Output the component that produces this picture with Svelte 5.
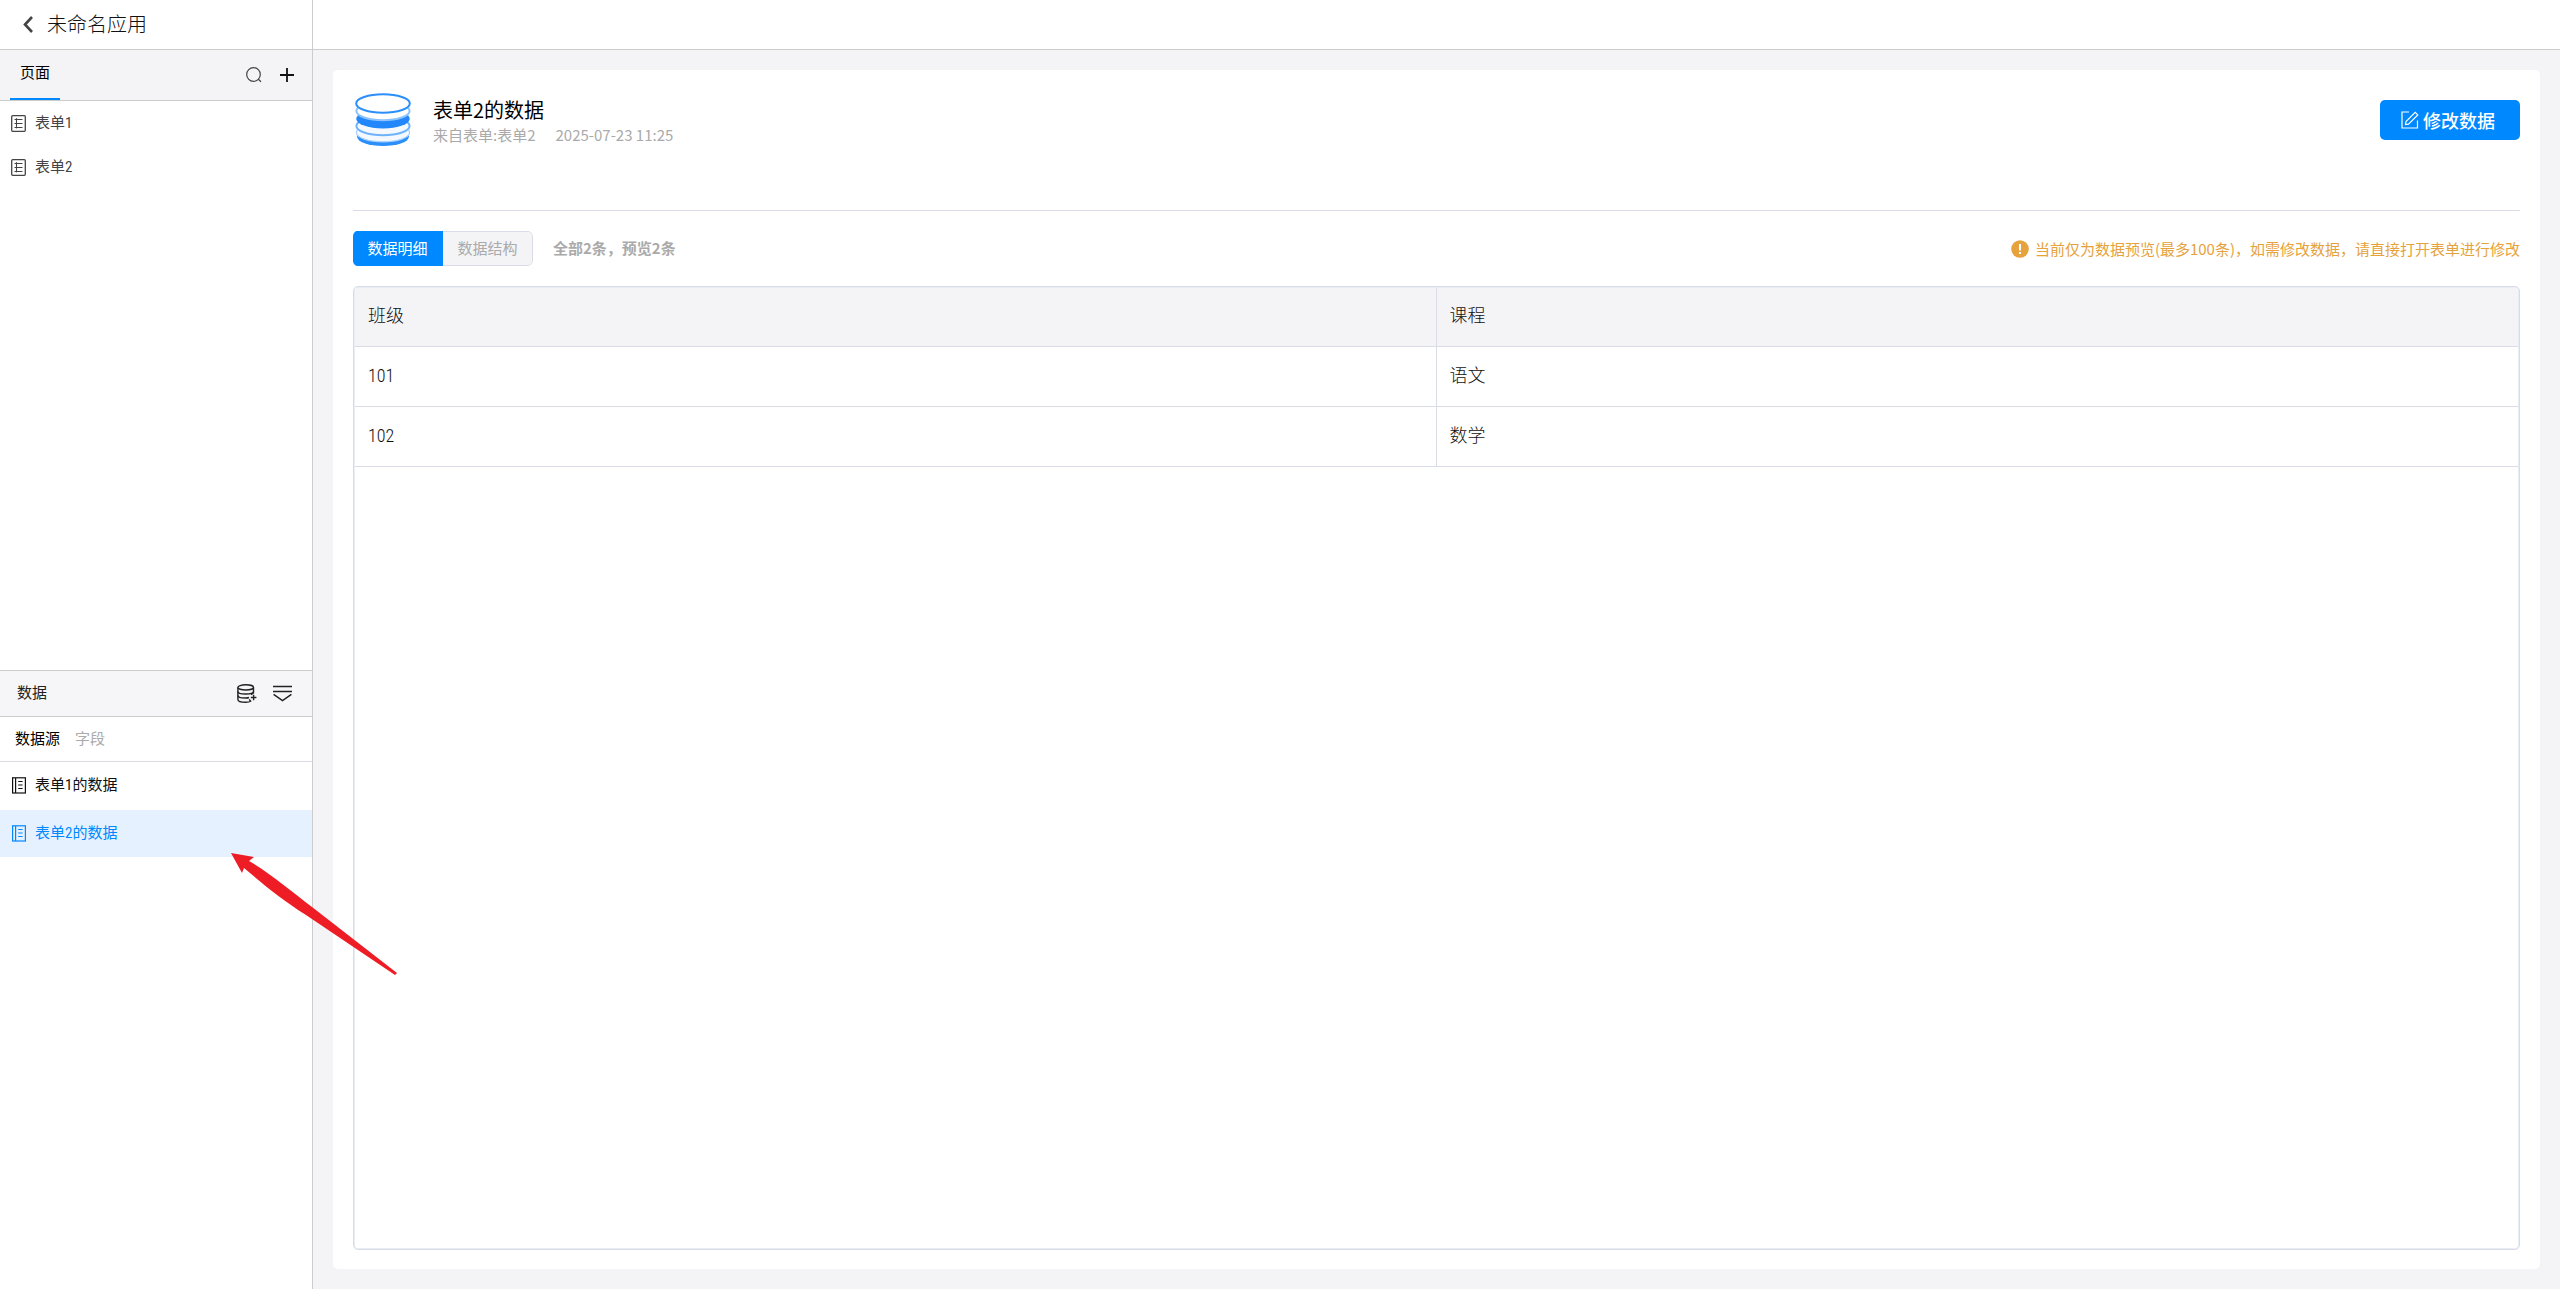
<script lang="ts">
	type Item = { id: number; name: string };

	const forms: Item[] = [
		{ id: 1, name: '表单1' },
		{ id: 2, name: '表单2' }
	];
	const sources: Item[] = [
		{ id: 1, name: '表单1的数据' },
		{ id: 2, name: '表单2的数据' }
	];
	const columns = ['班级', '课程'];
	const rows = [
		['101', '语文'],
		['102', '数学']
	];

	let activeSource = $state(2);
	let activeView = $state('detail');
</script>

<div class="app">
	<aside class="sidebar">
		<header class="app-title">
			<button type="button" class="icon-button" aria-label="返回">
				<svg width="10" height="17" viewBox="0 0 10 17">
					<path d="M9 1 L2 8.5 L9 16" fill="none" stroke="#444" stroke-width="2.6" />
				</svg>
			</button>
			<h1>未命名应用</h1>
		</header>

		<section class="panel">
			<div class="page-bar">
				<button type="button" class="page-tab">页面</button>
				<div class="page-actions">
					<button type="button" class="icon-button" aria-label="搜索">
						<svg width="16" height="16" viewBox="0 0 16 16" fill="none" stroke="#444" stroke-width="1.2">
							<circle cx="7.5" cy="7.5" r="6.8" />
							<path d="M12.3 12.3 L15 14.8" />
						</svg>
					</button>
					<button type="button" class="icon-button" aria-label="新建页面">
						<svg width="14" height="14" viewBox="0 0 14 14" stroke="#111" stroke-width="1.8">
							<path d="M7 0 V14 M0 7 H14" />
						</svg>
					</button>
				</div>
			</div>
			<nav>
				{#each forms as form (form.id)}
					<a class="form-link" href="#form-{form.id}">
						<svg width="15" height="17" viewBox="0 0 15 17" fill="none" stroke="currentColor">
							<rect x="0.7" y="0.7" width="13.6" height="15.6" rx="1" stroke-width="1.3" />
							<path d="M5.5 3.2 V13.4" stroke-width="1.1" />
							<path d="M3.5 4.5 H11.5 M3.5 8.5 H11.5 M3.5 12.5 H11.5" stroke-width="1.1" />
						</svg>
						{form.name}
					</a>
				{/each}
			</nav>
		</section>

		<section class="panel data-panel">
			<div class="data-bar">
				<h2>数据</h2>
				<div class="data-actions">
					<button type="button" class="icon-button" aria-label="新建数据源">
						<svg width="20" height="19" viewBox="0 0 20 19" fill="none" stroke="#222" stroke-width="1.4">
							<ellipse cx="8.7" cy="3.4" rx="7.8" ry="2.6" />
							<path d="M0.9 3.4 V15.4 C0.9 17 4.5 18.2 8.7 18.2 C11 18.2 12.6 17.9 13.6 17.2 L12.2 15.4" />
							<path d="M0.9 7.4 C0.9 9 4.5 10 8.7 10 C13 10 16.5 9 16.5 7.4 V3.4" />
							<path d="M0.9 11.4 C0.9 13 4.5 14 8.7 14 C10 14 11 13.9 12 13.5" />
							<path d="M16.5 7.4 V9 L14 10.8" />
							<path d="M16.6 10.8 V16.2 M13.8 13.5 H19.4" />
						</svg>
					</button>
					<button type="button" class="icon-button" aria-label="收起">
						<svg width="19" height="17" viewBox="0 0 19 17" fill="none" stroke="#222" stroke-width="1.5">
							<path d="M0 1.5 H19 M0 6.5 H19 M0.6 9.4 L9.5 15.6 L18.4 9.4" />
						</svg>
					</button>
				</div>
			</div>
			<div class="source-tabs">
				<button type="button" class="selected">数据源</button>
				<button type="button">字段</button>
			</div>
			<nav>
				{#each sources as source (source.id)}
					<a
						class="source-link"
						class:active={source.id === activeSource}
						href="#source-{source.id}"
						onclick={() => (activeSource = source.id)}
					>
						<svg width="15" height="17" viewBox="0 0 15 17" fill="none" stroke="currentColor">
							<rect x="1.6" y="0.8" width="12.8" height="15.2" stroke-width="1.2" />
							<path d="M4.6 1 V16" stroke-width="1.2" />
							<path d="M7.2 4.5 H11.6 M7.2 8 H11.6 M7.2 11.5 H11.6" stroke-width="1.1" />
						</svg>
						{source.name}
					</a>
				{/each}
			</nav>
			<svg class="pointer" width="166" height="122" viewBox="0 0 166 122">
				<path
					d="M0 0 L23 4 L18 8 C40 21 60 38 81 54 L166 120 L164 122 L75 62 C50 46 32 31 13 15 L11 20 Z"
					fill="#ee1c25"
				/>
			</svg>
		</section>
	</aside>

	<div class="content">
		<div class="top-bar"></div>
		<main>
			<article class="card">
				<header class="source-header">
					<svg class="source-icon" width="60" height="60" viewBox="0 0 60 60">
						<ellipse cx="30" cy="46.5" rx="26" ry="9.6" fill="#2b8ffb" />
						<ellipse cx="30" cy="42.5" rx="26.6" ry="9.3" fill="#f4f9ff" stroke="#a9d1fe" stroke-width="1.2" />
						<ellipse cx="30" cy="36" rx="26.6" ry="9.2" fill="#f4f9ff" stroke="#6fb2fd" stroke-width="2" />
						<ellipse cx="30" cy="28.8" rx="26.8" ry="9.6" fill="#2287fa" />
						<ellipse cx="30" cy="21" rx="26.6" ry="9.2" fill="#fff" stroke="#8cc3fe" stroke-width="2" />
						<ellipse cx="30" cy="13.5" rx="26.8" ry="9.2" fill="#fff" stroke="#2b8ffb" stroke-width="2" />
					</svg>
					<div class="source-info">
						<h2>表单2的数据</h2>
						<p><span>来自表单:表单2</span><time>2025-07-23 11:25</time></p>
					</div>
					<button type="button" class="edit-button">
						<svg width="18" height="18" viewBox="0 0 18 18" fill="none" stroke="#fff" stroke-width="1.2">
							<path d="M8 1 H1 V17 H16.5 V9.5" />
							<path d="M4.5 13.5 L5 10.5 L14.2 1.3 L16.8 3.9 L7.5 13.2 Z" />
						</svg>
						修改数据
					</button>
				</header>

				<div class="view-bar">
					<div class="view-switch">
						<button type="button" class:on={activeView === 'detail'} onclick={() => (activeView = 'detail')}>数据明细</button>
						<button type="button" class:on={activeView === 'schema'} onclick={() => (activeView = 'schema')}>数据结构</button>
					</div>
					<strong>全部2条，预览2条</strong>
					<p class="hint">
						<svg width="18" height="18" viewBox="0 0 18 18">
							<circle cx="9" cy="9" r="8.8" fill="#e6a23c" />
							<path d="M9 4 V10.4 M9 12 V14" stroke="#fff" stroke-width="2" />
						</svg>
						当前仅为数据预览(最多100条)，如需修改数据，请直接打开表单进行修改
					</p>
				</div>

				<div class="table-box">
					<table>
						<thead>
							<tr>
								{#each columns as column}
									<th>{column}</th>
								{/each}
							</tr>
						</thead>
						<tbody>
							{#each rows as row}
								<tr>
									{#each row as cell}
										<td>{cell}</td>
									{/each}
								</tr>
							{/each}
						</tbody>
					</table>
				</div>
			</article>
		</main>
	</div>
</div>

<style>
	:global(body) {
		margin: 0;
	}
	.app {
		display: flex;
		min-height: 100vh;
		background: #f4f4f7;
		color: #444;
		font-family: 'Roboto Condensed', Roboto, 'Noto Sans CJK SC', sans-serif;
		font-size: 15px;
		line-height: 20px;
	}
	.app :global(*) {
		box-sizing: border-box;
	}
	h1,
	h2,
	p {
		margin: 0;
		font-weight: inherit;
	}
	button {
		border: 0;
		padding: 0;
		background: none;
		color: inherit;
		font: inherit;
		cursor: pointer;
	}
	a {
		color: inherit;
		text-decoration: none;
	}
	svg {
		display: block;
		flex: none;
	}
	.sidebar {
		display: flex;
		flex: none;
		flex-direction: column;
		width: 313px;
		border-right: 1px solid #ccc;
		background: #fff;
	}
	.app-title {
		display: flex;
		align-items: center;
		gap: 14px;
		height: 50px;
		border-bottom: 1px solid #ccc;
		padding-left: 23px;
	}
	.app-title h1 {
		color: #111;
		font-size: 20px;
		font-weight: 300;
	}
	.panel {
		flex: 1 1 1px;
	}
	.page-bar {
		display: flex;
		align-items: center;
		justify-content: space-between;
		height: 51px;
		border-bottom: 1px solid #ccc;
		background: #f4f4f7;
		padding: 0 18px 0 10px;
	}
	.page-tab {
		align-self: stretch;
		width: 50px;
		border-bottom: 2px solid #08f;
		padding-bottom: 2px;
		color: #000;
	}
	.page-actions {
		display: flex;
		align-items: center;
		gap: 18px;
	}
	.data-actions {
		display: flex;
		align-items: center;
		gap: 16px;
	}
	.form-link,
	.source-link {
		display: flex;
		align-items: center;
		gap: 9px;
		height: 44px;
		padding-left: 11px;
	}
	.data-panel {
		position: relative;
		border-top: 1px solid #ccc;
	}
	.data-bar {
		display: flex;
		align-items: center;
		justify-content: space-between;
		height: 46px;
		border-bottom: 1px solid #ccc;
		background: #f6f6f8;
		padding: 0 20px 0 17px;
	}
	.data-bar h2 {
		color: #222;
		font-size: 15px;
	}
	.source-tabs {
		display: flex;
		gap: 15px;
		height: 45px;
		border-bottom: 1px solid #d9dce6;
		padding-left: 15px;
		color: #aaa;
	}
	.source-tabs .selected {
		color: #000;
	}
	.source-link {
		height: 47px;
		margin-bottom: 1px;
		color: #111;
	}
	.source-link.active {
		background: #e5f1fe;
		color: #08f;
	}
	.pointer {
		position: absolute;
		top: 182px;
		left: 231px;
		pointer-events: none;
	}
	.content {
		display: flex;
		flex: 1;
		flex-direction: column;
		min-width: 0;
	}
	.top-bar {
		height: 50px;
		border-bottom: 1px solid #ccc;
		background: #fff;
	}
	main {
		display: flex;
		flex: 1;
		padding: 20px;
	}
	.card {
		display: flex;
		flex: 1;
		flex-direction: column;
		border-radius: 5px;
		background: #fff;
		padding: 20px 20px 19px;
		font-family: 'Noto Sans CJK SC', sans-serif;
	}
	.source-header {
		display: flex;
		align-items: flex-start;
		height: 121px;
		border-bottom: 1px solid #d9dce6;
	}
	.source-info {
		flex: 1;
		padding: 7px 0 0 20px;
	}
	.source-info h2 {
		color: #000;
		font-size: 20px;
		line-height: 26px;
	}
	.source-info p {
		display: flex;
		gap: 20px;
		color: #aaa;
		line-height: 24px;
	}
	.edit-button {
		display: flex;
		align-items: center;
		gap: 4px;
		width: 140px;
		height: 40px;
		margin-top: 10px;
		border-radius: 5px;
		background: #08f;
		padding-left: 21px;
		color: #fff;
		font-size: 18px;
		font-weight: 500;
	}
	.view-bar {
		display: flex;
		align-items: center;
		gap: 20px;
		height: 75px;
	}
	.view-switch {
		display: flex;
		height: 35px;
		border-radius: 5px;
		overflow: hidden;
	}
	.view-switch button {
		width: 90px;
		border: 1px solid #d9dce6;
		border-left: 0;
		border-radius: 0 5px 5px 0;
		padding-bottom: 2px;
		background: #f4f4f7;
		color: #aaa;
	}
	.view-switch .on {
		border-color: #08f;
		border-radius: 0;
		background: #08f;
		color: #fff;
	}
	.view-bar strong {
		padding-bottom: 2px;
		color: #aaa;
		font-weight: 700;
	}
	.hint {
		display: flex;
		align-items: center;
		gap: 6px;
		margin-left: auto;
		color: #e6a23c;
	}
	.table-box {
		flex: 1;
		border: 1px solid #d9dce6;
		border-radius: 5px;
		box-shadow: inset 0 0 0 1px #e9edf5;
		padding: 1px;
	}
	table {
		width: 100%;
		border-spacing: 0;
		table-layout: fixed;
		color: #111;
		font-family: 'Roboto Condensed', Roboto, 'Noto Sans CJK SC', sans-serif;
		font-size: 18px;
	}
	th,
	td {
		height: 60px;
		border-bottom: 1px solid #d9dce6;
		padding: 0 14px 2px 13px;
		font-weight: 300;
		text-align: left;
	}
	th {
		height: 59px;
		background: #f4f4f7;
	}
	th:first-child,
	td:first-child {
		border-right: 1px solid #d9dce6;
	}
</style>
